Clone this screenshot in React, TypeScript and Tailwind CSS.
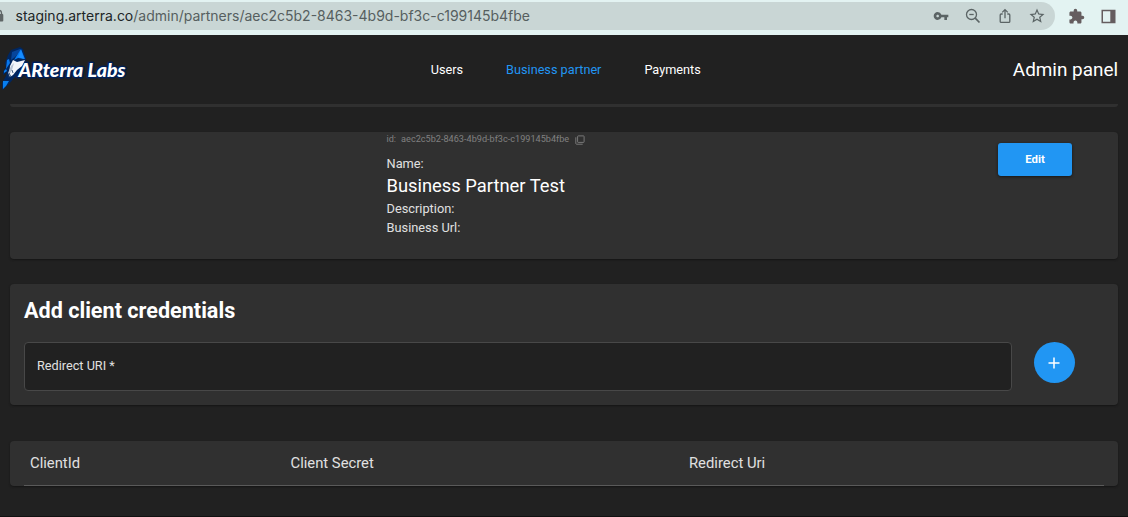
import { MdExtension, MdStarBorder, MdVpnKey } from 'react-icons/md'

const PARTNER_ID = 'aec2c5b2-8463-4b9d-bf3c-c199145b4fbe'

function BrowserBar() {
  return (
    <div className="flex h-[35px] shrink-0 items-start bg-[#e3f3f2] pt-0.5 font-['Inter',sans-serif]">
      <div className="flex h-7 w-[1055px] items-center rounded-r-full bg-[#c9d6d5] text-[#5b6465]">
        <svg className="h-4 w-[15px] shrink-0" viewBox="0 0 15 16" fill="none">
          <rect x="-5" y="6" width="8.3" height="7.5" rx="1" fill="#5f6566" />
          <path d="M1.5 6.5V5A2.6 2.6 0 0 0-1 2.4" stroke="#5f6566" strokeWidth="1.4" />
        </svg>
        <svg className="h-7 w-[520px] shrink-0" viewBox="0 0 520 28">
          <text x="0.5" y="19" fontSize="14" fill="#565f60" textLength="514.5">
            <tspan fill="#202526">staging.arterra.co</tspan>/admin/partners/{PARTNER_ID}
          </text>
        </svg>
        <div className="ml-auto flex items-center gap-[14px] pr-[9px]">
          <MdVpnKey className="mr-px size-4" />
          <svg className="size-[18px]" viewBox="0 0 18 18" fill="none" stroke="currentColor" strokeWidth="1.3">
            <circle cx="7.5" cy="7.5" r="5" />
            <path d="M5.3 7.5h4.4" />
            <path d="m11.2 11.2 4.3 4.3" strokeWidth="1.7" />
          </svg>
          <svg className="size-[18px]" viewBox="0 0 18 18" fill="none" stroke="currentColor" strokeWidth="1.3">
            <path d="M6.7 7H5.2a1 1 0 0 0-1 1v6.4a1 1 0 0 0 1 1h7.6a1 1 0 0 0 1-1V8a1 1 0 0 0-1-1h-1.5" />
            <path d="M9 11.3V2.8M6.2 5.4 9 2.6l2.8 2.8" />
          </svg>
          <MdStarBorder className="size-[18px]" />
        </div>
      </div>
      <div className="flex h-7 items-center gap-4 pl-[13px] text-[#655d5f]">
        <MdExtension className="size-[17px]" />
        <svg className="size-[15px]" viewBox="0 0 15 15">
          <path fill="currentColor" fillRule="evenodd" d="M.5.8h14v13.5H.5zM2 2.3v10.5h7.3V2.3z" />
        </svg>
      </div>
    </div>
  )
}

function Logo() {
  return (
    <svg className="h-[50px] w-[130px]" viewBox="0 0 130 50">
      <path d="M8 9 11 4 20 1 23 3 26 13 25 17 20 26 14 32 9 38 2 44 2 37 6 30 7 26 3 29 3 26 6 21 5 17z" fill="#00265f" />
      <path d="M12 6 20 3 21 5 15 11 11 14z" fill="#06459b" />
      <path d="M21 3 25 13 18 12 14 14z" fill="#077cf2" />
      <path d="m21 4 3 9-6-2z" fill="#168cff" />
      <path d="m7 14 2-1 1 4-4 6z" fill="#0878ed" />
      <text
        x="18.5"
        y="30.8"
        fontSize="18"
        textLength="107"
        lengthAdjust="spacingAndGlyphs"
        fill="#fff"
        stroke="#001f57"
        strokeWidth="3"
        paintOrder="stroke"
        strokeLinejoin="round"
        className="font-['Lato',sans-serif] font-black italic"
      >
        ARterra Labs
      </text>
      <path d="m10 20 3-6 4 2 8-2-3 6-5 4-4 5-3 2-1-2z" fill="#f4f6fa" />
      <path d="m11 20 3-3-2 7-3 5-1-2z" fill="#b9c4d4" />
      <path d="m4 25 2-2 1 2-3 2z" fill="#087fef" />
      <path d="m9 27 2 4m1-7 1 3m-5 1 1 4" stroke="#173963" strokeWidth=".8" />
      <path d="m3 35 6 0-3 5-3 3z" fill="#087fef" />
    </svg>
  )
}

function Header() {
  return (
    <header className="grid h-[69px] shrink-0 grid-cols-[1fr_auto_1fr] items-center pt-0.5">
      <div>
        <Logo />
      </div>
      <nav className="flex gap-[43px] pb-0.5 pl-[3.5px] text-[12.7px] text-white">
        <a>Users</a>
        <a className="text-[#2196f3]">Business partner</a>
        <a>Payments</a>
      </nav>
      <div className="pr-2.5 text-right text-[18.9px] text-white">Admin panel</div>
    </header>
  )
}

export default function App() {
  return (
    <div className="flex h-[517px] w-[1128px] flex-col overflow-hidden border-b border-[#111] bg-[#212121] font-['Roboto',sans-serif] text-[#e0e0e0]">
      <BrowserBar />
      <Header />
      <div className="mx-2.5 h-[3px] shrink-0 rounded-b bg-[#303030]" />

      <main className="flex flex-col px-2.5 pt-[25px]">
        <section className="flex h-[127px] items-start rounded bg-[#303030] pl-[376.5px] shadow-[0_1px_2px_#151515]">
          <div className="flex flex-col text-[12.8px] leading-[19px]">
            <div className="flex h-[15px] items-center text-[9.15px] text-[#808080]">
              <span>id:</span>
              <span className="ml-[5px]">{PARTNER_ID}</span>
              <svg className="ml-1.5 size-2.5" viewBox="0 0 10 10" fill="none" stroke="currentColor" strokeWidth=".9">
                <rect x="2.6" y=".9" width="6.5" height="6.5" rx=".6" />
                <path d="M.8 2.3v6.2a.7.7 0 0 0 .7.7h6.2" />
              </svg>
            </div>
            <p className="mt-[7px]">Name:</p>
            <h2 className="text-[18.35px] leading-[26px] text-white">Business Partner Test</h2>
            <p>Description:</p>
            <p>Business Url:</p>
          </div>
          <button className="mt-[11px] mr-[46px] ml-auto h-[33px] w-[74px] rounded-[3px] bg-[#2196f3] text-[11.4px] font-bold text-white shadow-[0_1px_3px_#151515]">
            Edit
          </button>
        </section>

        <section className="mt-[25px] h-[121px] rounded bg-[#303030] px-3.5 pt-3 shadow-[0_1px_2px_#151515]">
          <h1 className="text-[21.6px] leading-[30px] font-bold text-white">Add client credentials</h1>
          <div className="mt-4 flex items-start">
            <div className="flex h-[49px] w-[988px] items-center rounded border border-[#484848] bg-[#212121] px-3 pb-px text-[12.7px]">
              Redirect URI *
            </div>
            <button className="ml-[21.5px] flex size-[41px] items-center justify-center rounded-full bg-[#2196f3] text-white">
              <svg className="size-3" viewBox="0 0 12 12" stroke="currentColor" strokeWidth="1.5">
                <path d="M.5 6h11M6 .5v11" />
              </svg>
            </button>
          </div>
        </section>

        <section className="mt-9 h-[45px] rounded bg-[#303030] px-3.5 shadow-[0_1px_2px_#151515]">
          <div className="grid h-full grid-cols-[260.5px_398.5px_1fr] items-center border-b border-[#5a5a5a] pl-1.5 text-[14.8px]">
            <span>ClientId</span>
            <span>Client Secret</span>
            <span>Redirect Uri</span>
          </div>
        </section>
      </main>
    </div>
  )
}
